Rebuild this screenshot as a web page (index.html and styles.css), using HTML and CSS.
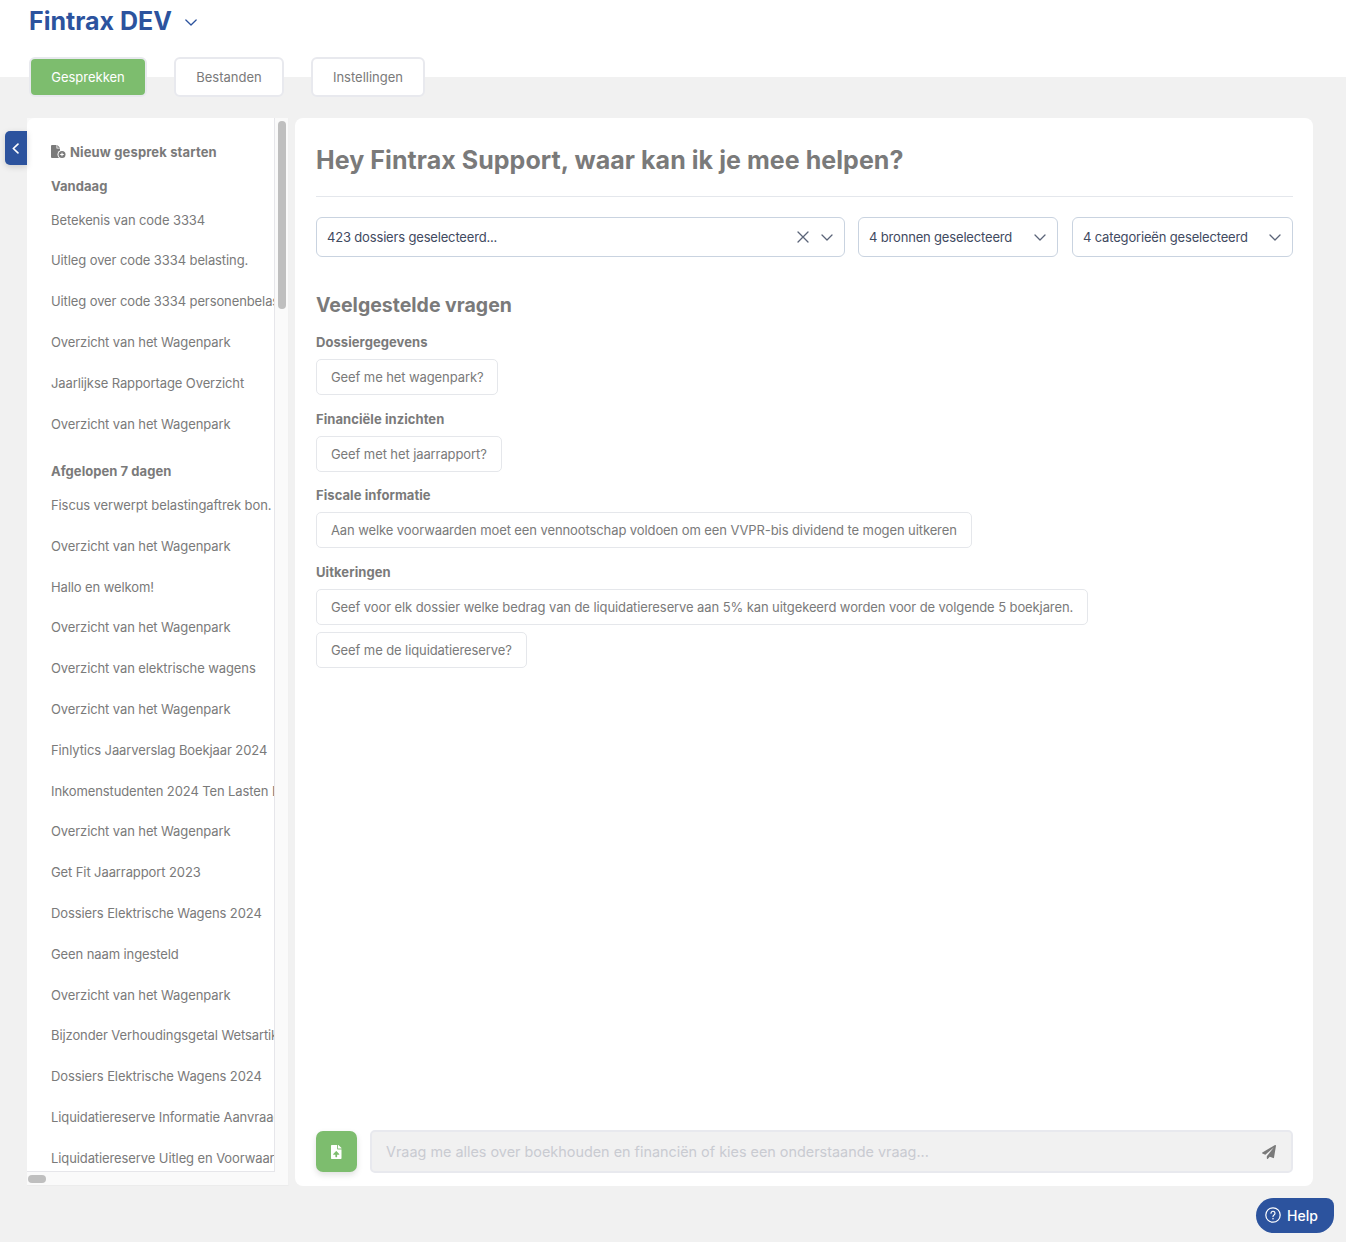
FILE: index.html
```html
<!DOCTYPE html>
<html lang="nl">
<head>
<meta charset="utf-8">
<title>Fintrax DEV</title>
<link rel="stylesheet" href="styles.css">
</head>
<body>
<header class="topbar">
  <div class="brand">
    <h1 class="brand-name">Fintrax DEV</h1>
    <svg class="brand-caret" viewBox="0 0 14 8" width="12" height="7"><path d="M1 1l6 6 6-6" fill="none" stroke="#2c539e" stroke-width="1.5" stroke-linecap="round" stroke-linejoin="round"/></svg>
  </div>
  <nav class="tabs">
    <a class="tab tab-active">Gesprekken</a>
    <a class="tab tab-files">Bestanden</a>
    <a class="tab tab-settings">Instellingen</a>
  </nav>
</header>
<div class="workspace">
  <button class="collapse" aria-label="Inklappen"><svg viewBox="0 0 8 12" width="7" height="11"><path d="M6.800 1L1.500 6l5.300 5" fill="none" stroke="#fff" stroke-width="1.900" stroke-linecap="round" stroke-linejoin="round"/></svg></button>
  <aside class="sidebar">
    <div class="side-view">
      <div class="side-scroll">
        <div class="new-chat">
          <svg class="new-icon" viewBox="0 0 16 14" width="16" height="14"><path d="M1 0h4.500v3.500H9V13H1a1 1 0 0 1-1-1V1a1 1 0 0 1 1-1z" fill="#7a7a7a"/><path d="M6.300 0L9 2.700H6.300z" fill="#7a7a7a"/><circle cx="11" cy="9.500" r="4.500" fill="#fff"/><circle cx="11" cy="9.500" r="3.500" fill="#7a7a7a"/><path d="M11 7.700v3.600M9.200 9.500h3.600" stroke="#fff" stroke-width="1"/></svg>
          <span>Nieuw gesprek starten</span>
        </div>
        <h3 class="side-group">Vandaag</h3>
        <ul class="side-list">
          <li>Betekenis van code 3334</li>
          <li>Uitleg over code 3334 belasting.</li>
          <li>Uitleg over code 3334 personenbelasting</li>
          <li>Overzicht van het Wagenpark</li>
          <li>Jaarlijkse Rapportage Overzicht</li>
          <li>Overzicht van het Wagenpark</li>
        </ul>
        <h3 class="side-group side-group-next">Afgelopen 7 dagen</h3>
        <ul class="side-list">
          <li>Fiscus verwerpt belastingaftrek bon.</li>
          <li>Overzicht van het Wagenpark</li>
          <li>Hallo en welkom!</li>
          <li>Overzicht van het Wagenpark</li>
          <li>Overzicht van elektrische wagens</li>
          <li>Overzicht van het Wagenpark</li>
          <li>Finlytics Jaarverslag Boekjaar 2024</li>
          <li>Inkomenstudenten 2024 Ten Lasten Leggen</li>
          <li>Overzicht van het Wagenpark</li>
          <li>Get Fit Jaarrapport 2023</li>
          <li>Dossiers Elektrische Wagens 2024</li>
          <li>Geen naam ingesteld</li>
          <li>Overzicht van het Wagenpark</li>
          <li>Bijzonder Verhoudingsgetal Wetsartikel</li>
          <li>Dossiers Elektrische Wagens 2024</li>
          <li>Liquidatiereserve Informatie Aanvraag</li>
          <li>Liquidatiereserve Uitleg en Voorwaarden</li>
        </ul>
      </div>
      <div class="track-v"><span class="thumb-v"></span></div>
    </div>
    <div class="track-h"><span class="thumb-h"></span></div>
  </aside>
  <main class="panel">
    <h2 class="greeting">Hey Fintrax Support, waar kan ik je mee helpen?</h2>
    <div class="filters">
      <div class="select select-dossiers">
        <span class="select-text">423 dossiers geselecteerd...</span>
        <svg class="clear" viewBox="0 0 12 12" width="12" height="12"><path d="M1 1l10 10M11 1L1 11" stroke="#5b6478" stroke-width="1.300" stroke-linecap="round"/></svg>
        <svg class="chev" viewBox="0 0 12 7" width="12" height="7"><path d="M1 1l5 5 5-5" fill="none" stroke="#5b6478" stroke-width="1.300" stroke-linecap="round" stroke-linejoin="round"/></svg>
      </div>
      <div class="select select-sources">
        <span class="select-text">4 bronnen geselecteerd</span>
        <svg class="chev" viewBox="0 0 12 7" width="12" height="7"><path d="M1 1l5 5 5-5" fill="none" stroke="#5b6478" stroke-width="1.300" stroke-linecap="round" stroke-linejoin="round"/></svg>
      </div>
      <div class="select select-cats">
        <span class="select-text">4 categorieën geselecteerd</span>
        <svg class="chev" viewBox="0 0 12 7" width="12" height="7"><path d="M1 1l5 5 5-5" fill="none" stroke="#5b6478" stroke-width="1.300" stroke-linecap="round" stroke-linejoin="round"/></svg>
      </div>
    </div>
    <section class="faq">
      <h2 class="faq-title">Veelgestelde vragen</h2>
      <h4 class="faq-cat">Dossiergegevens</h4>
      <button class="faq-btn">Geef me het wagenpark?</button>
      <h4 class="faq-cat">Financiële inzichten</h4>
      <button class="faq-btn">Geef met het jaarrapport?</button>
      <h4 class="faq-cat">Fiscale informatie</h4>
      <button class="faq-btn">Aan welke voorwaarden moet een vennootschap voldoen om een VVPR-bis dividend te mogen uitkeren</button>
      <h4 class="faq-cat">Uitkeringen</h4>
      <button class="faq-btn">Geef voor elk dossier welke bedrag van de liquidatiereserve aan 5% kan uitgekeerd worden voor de volgende 5 boekjaren.</button>
      <button class="faq-btn faq-btn-next">Geef me de liquidatiereserve?</button>
    </section>
    <div class="composer">
      <button class="upload" aria-label="Bestand uploaden"><svg viewBox="0 0 384 512" width="10.500" height="14"><path fill="#fff" d="M224 136V0H24C10.700 0 0 10.700 0 24v464c0 13.300 10.700 24 24 24h336c13.300 0 24-10.700 24-24V160H248c-13.200 0-24-10.800-24-24zm65.180 216.010H224v80c0 8.840-7.160 16-16 16h-32c-8.840 0-16-7.160-16-16v-80H94.820c-14.280 0-21.410-17.290-11.270-27.360l96.420-95.700c6.650-6.610 17.390-6.610 24.040 0l96.420 95.700c10.150 10.070 3.030 27.360-11.250 27.360zM377 105L279.100 7c-4.500-4.500-10.600-7-17-7H256v128h128v-6.100c0-6.300-2.500-12.400-7-16.900z"/></svg></button>
      <div class="ask">
        <span class="ask-text">Vraag me alles over boekhouden en financiën of kies een onderstaande vraag...</span>
        <svg class="send" viewBox="0 0 512 512" width="14" height="14"><path fill="#7a7a7a" d="M476 3.200L12.500 270.600c-18.100 10.400-15.800 35.600 2.200 43.200L121 358.400l287.300-253.200c5.500-4.900 13.300 2.600 8.600 8.300L176 407v80.500c0 23.600 28.500 32.900 42.500 15.800L282 426l124.600 52.200c14.200 6 30.400-2.900 33-18.200l72-432C515 7.800 493.300-6.800 476 3.200z"/></svg>
      </div>
    </div>
  </main>
</div>
<button class="help">
  <svg viewBox="0 0 16 16" width="16" height="16"><circle cx="8" cy="8" r="7.200" fill="none" stroke="#fff" stroke-width="1.200"/><path d="M6 6.200a2 2 0 1 1 3 1.800c-.7.400-1 .8-1 1.600" fill="none" stroke="#fff" stroke-width="1.200" stroke-linecap="round"/><circle cx="8" cy="11.700" r=".8" fill="#fff"/></svg>
  <span>Help</span>
</button>
</body>
</html>
```
FILE: styles.css
```css
* { box-sizing: border-box; }
html, body { margin: 0; height: 100%; }
body {
  background: #f1f1f1;
  font-family: Inter, "Liberation Sans", sans-serif;
  color: #7a7a7a;
  height: 1242px;
  overflow: hidden;
  position: relative;
}
.topbar {
  background: #fff;
  height: 77px;
  padding-left: 29px;
}
.brand {
  display: flex;
  align-items: center;
  height: 42px;
}
.brand-name {
  margin: 0;
  font-size: 25px;
  font-weight: 700;
  color: #2c539e;
}
.brand-caret { margin-left: 13px; margin-top: 2px; }
.tabs {
  display: flex;
  margin-top: 15px;
}
.tab {
  height: 40px;
  display: flex;
  align-items: center;
  justify-content: center;
  background: #fff;
  border: 2px solid #e8e9ee;
  border-radius: 6px;
  font-size: 13px;
  color: #7a7a7a;
}
.tab-active {
  width: 118px;
  background: #7dbd6e;
  color: #fff;
}
.tab-files { width: 110px; margin-left: 27px; }
.tab-settings { width: 114px; margin-left: 27px; }
.workspace {
  display: flex;
  margin-top: 41px;
  padding-left: 27px;
  position: relative;
}
.collapse {
  position: absolute;
  left: 5px;
  top: 13px;
  width: 22px;
  height: 34px;
  padding: 0 2px 0 0;
  border: 0;
  background: #2c539e;
  border-radius: 5px 0 0 5px;
  display: flex;
  align-items: center;
  justify-content: center;
  box-shadow: 0 2px 6px rgba(0,0,0,.15);
}
.sidebar {
  width: 262px;
  height: 1068px;
  background: #fafafa;
  border-right: 1px solid #f0f0f0;
  border-bottom: 1px solid #ececec;
  display: flex;
  flex-direction: column;
}
.side-view {
  display: flex;
  height: 1054px;
}
.side-scroll {
  flex: none;
  width: 248px;
  height: 1054px;
  background: #fff;
  border-right: 1px solid #e6e6ea;
  border-bottom: 1px solid #e6e6ea;
  overflow: hidden;
  padding: 24px 0 0 24px;
  border-radius: 8px 0 0 0;
}
.new-chat {
  display: flex;
  align-items: center;
  gap: 3px;
  height: 20px;
  font-size: 13px;
  font-weight: 700;
  letter-spacing: 0.14px;
  white-space: nowrap;
}
.new-icon { flex: none; }
.side-group {
  margin: 14px 0 0;
  font-size: 13px;
  font-weight: 700;
  letter-spacing: 0.05px;
  line-height: 20px;
  white-space: nowrap;
}
.side-group-next { margin-top: 17.1px; }
.side-list {
  list-style: none;
  margin: 3.6px 0 0;
  padding: 0;
}
.side-list li {
  height: 40.8px;
  line-height: 20px;
  padding-top: 10px;
  font-size: 13px;
  letter-spacing: -0.1px;
  white-space: nowrap;
}
.track-v {
  flex: 1;
  min-width: 0;
  padding: 3px 0 0 3px;
}
.thumb-v {
  display: block;
  width: 8px;
  height: 188px;
  border-radius: 4px;
  background: #bfbfbf;
}
.track-h { flex: 1; padding: 3px 0 0 1px; }
.thumb-h {
  display: block;
  width: 18px;
  height: 8px;
  border-radius: 4px;
  background: #bfbfbf;
}
.panel {
  width: 1018px;
  height: 1068px;
  margin-left: 6px;
  background: #fff;
  border-radius: 8px;
  padding: 0 20px 13px 21px;
  display: flex;
  flex-direction: column;
}
.greeting {
  margin: 0;
  height: 79px;
  padding-top: 26px;
  font-size: 25px;
  letter-spacing: 0.06px;
  line-height: 32px;
  font-weight: 700;
  border-bottom: 1px solid #e4e7ec;
}
.filters {
  display: flex;
  margin-top: 20px;
  gap: 13px;
}
.select {
  height: 40px;
  border: 1px solid #c9d3e0;
  border-radius: 6px;
  display: flex;
  align-items: center;
  padding: 0 11px 0 10px;
  font-size: 13px;
  letter-spacing: -0.17px;
  color: #3f4a5f;
  white-space: nowrap;
}
.select-text { flex: 1; }
.select-dossiers { width: 529px; }
.select-sources { width: 200px; }
.select-cats { width: 221px; margin-left: 1px; }
.clear { margin-right: 12px; }
.faq { flex: 1; padding-top: 34px; }
.faq-title {
  margin: 0;
  font-size: 19.5px;
  line-height: 28px;
  font-weight: 700;
}
.faq-cat {
  margin: 0 0 7px;
  padding-top: 13.7px;
  font-size: 13px;
  line-height: 20px;
  font-weight: 700;
  letter-spacing: 0.07px;
}
.faq-title + .faq-cat { padding-top: 13px; }
.faq-btn {
  display: block;
  height: 36px;
  padding: 0 14px;
  background: #fff;
  border: 1px solid #e5e7eb;
  border-radius: 5px;
  font: 400 13px Inter, "Liberation Sans", sans-serif;
  letter-spacing: -0.095px;
  color: #7a7a7a;
  white-space: nowrap;
}
.faq-btn-next { margin-top: 7px; }
.composer {
  display: flex;
  align-items: center;
  gap: 13px;
}
.upload {
  width: 41px;
  height: 41px;
  padding: 0;
  border: 0;
  border-radius: 7px;
  background: #7dbd6e;
  display: flex;
  align-items: center;
  justify-content: center;
  box-shadow: 0 3px 6px rgba(0,0,0,.12);
}
.ask {
  flex: 1;
  height: 43px;
  background: #f1f1f1;
  border: 2px solid #e8e9ee;
  border-radius: 5px;
  display: flex;
  align-items: center;
  justify-content: space-between;
  padding: 0 15px 0 14px;
  font-size: 14.4px;
  color: #c9cbd1;
}
.help {
  position: absolute;
  left: 1256px;
  top: 1198px;
  width: 78px;
  height: 35px;
  padding: 0 0 1px 9px;
  border: 0;
  background: #2c539e;
  border-radius: 18px 8px 18px 18px;
  color: #fff;
  display: flex;
  align-items: center;
  gap: 6px;
  font: 500 14px Inter, "Liberation Sans", sans-serif;
}
```
